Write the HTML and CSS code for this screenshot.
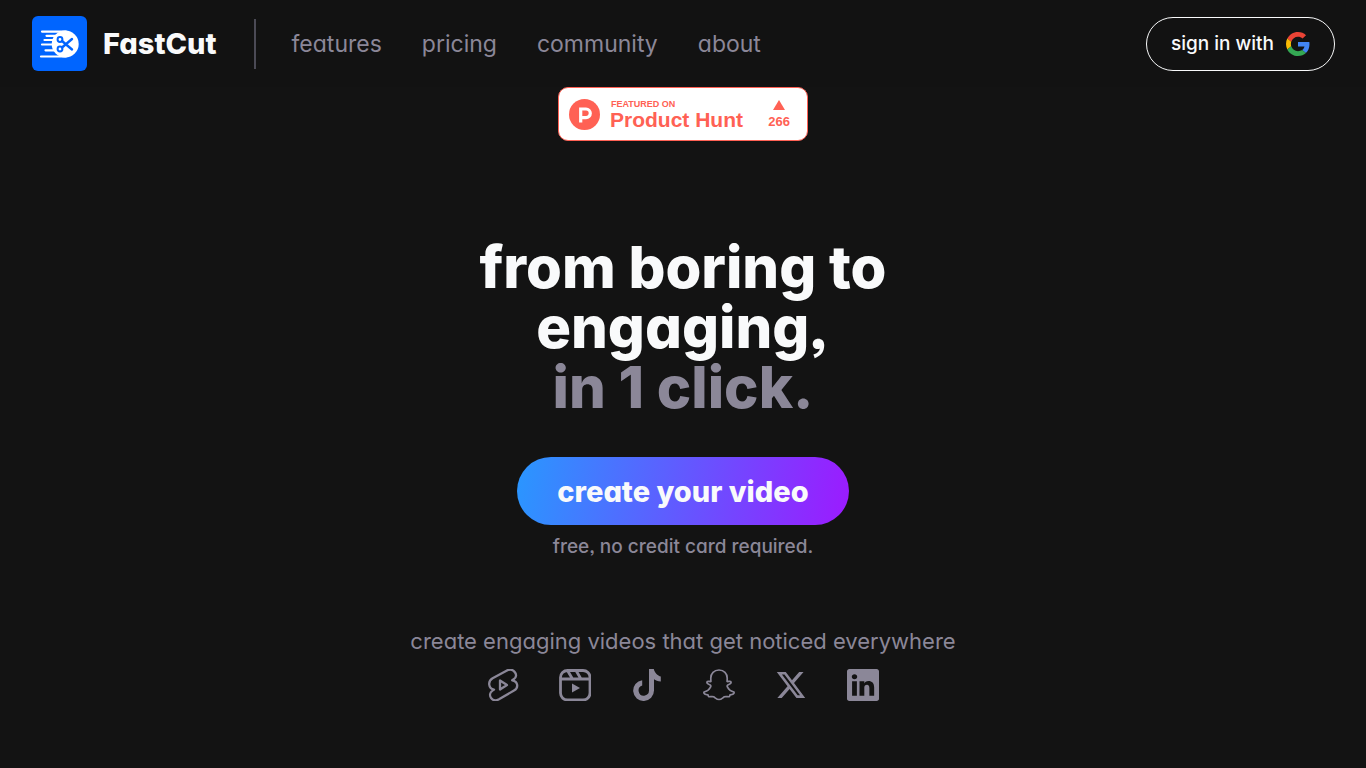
FILE: index.html
```html
<!DOCTYPE html>
<html lang="en">
<head>
<meta charset="utf-8">
<meta name="viewport" content="width=device-width, initial-scale=1">
<title>FastCut</title>
<link rel="stylesheet" href="styles.css">
</head>
<body>
<header class="header">
  <a class="brand" href="#">
    <svg class="brand-logo" viewBox="0 0 55 55" aria-hidden="true">
      <rect width="55" height="55" rx="6" fill="#0065ff"/>
      <g stroke="#fff" stroke-width="2.200" stroke-linecap="round" fill="none">
        <path d="M10 15.600H34M14.500 19.800H25M12.500 24H22M10 28.500H22M13.500 34.300H25M9 40.500H34"/>
      </g>
      <circle cx="33.200" cy="28" r="13.500" fill="#fff"/>
      <g stroke="#0065ff" fill="none" stroke-width="2">
        <circle cx="28" cy="23.500" r="2.400"/>
        <circle cx="28" cy="33" r="2.400"/>
        <path d="M30 25 40 33.500M30 31.500 40 23" stroke-width="2.400" stroke-linecap="round"/>
      </g>
    </svg>
    <span class="brand-name">FastCut</span>
  </a>
  <nav class="nav">
    <a href="#features">features</a>
    <a href="#pricing">pricing</a>
    <a href="#community">community</a>
    <a href="#about">about</a>
  </nav>
  <button class="sign-in" type="button">
    <span>sign in with</span>
    <svg class="google" viewBox="0 0 48 48" role="img" aria-label="Google">
      <path fill="#ea4335" d="M24 9.500c3.540 0 6.710 1.220 9.210 3.600l6.850-6.850C35.900 2.380 30.470 0 24 0 14.620 0 6.510 5.380 2.560 13.220l7.980 6.190C12.430 13.720 17.740 9.500 24 9.500z"/>
      <path fill="#4285f4" d="M46.980 24.550c0-1.570-.15-3.090-.38-4.550H24v9.020h12.940c-.58 2.960-2.260 5.480-4.780 7.180l7.730 6c4.510-4.180 7.090-10.360 7.090-17.650z"/>
      <path fill="#fbbc05" d="M10.530 28.590c-.48-1.450-.76-2.990-.76-4.590s.27-3.140.76-4.590l-7.980-6.190C.92 16.460 0 20.120 0 24c0 3.880.92 7.540 2.560 10.780l7.970-6.190z"/>
      <path fill="#34a853" d="M24 48c6.480 0 11.930-2.130 15.890-5.810l-7.730-6c-2.150 1.450-4.920 2.300-8.160 2.300-6.260 0-11.570-4.220-13.470-9.910l-7.980 6.190C6.510 42.620 14.620 48 24 48z"/>
    </svg>
  </button>
</header>
<main class="hero">
  <a class="product-hunt" href="#product-hunt">
    <svg class="ph-logo" viewBox="0 0 31 31" aria-hidden="true">
      <circle cx="15.500" cy="15.500" r="15.500" fill="#ff6154"/>
      <path d="M11.700 23.500V10H17a4.300 4.300 0 0 1 0 8.600h-5.300" fill="none" stroke="#fff" stroke-width="3.200"/>
    </svg>
    <span class="ph-text">
      <span class="ph-label">FEATURED ON</span>
      <span class="ph-name">Product Hunt</span>
    </span>
    <span class="ph-votes">
      <svg class="ph-arrow" viewBox="0 0 12 10" aria-hidden="true"><path d="M6 0 12 10H0z" fill="#ff6154"/></svg>
      <span>266</span>
    </span>
  </a>
  <h1 class="headline">from boring to<br>engaging,<br><span class="muted">in 1 click.</span></h1>
  <button class="cta" type="button">create your video</button>
  <p class="note">free, no credit card required.</p>
  <p class="tagline">create engaging videos that get noticed everywhere</p>
  <ul class="platforms">
    <li><svg viewBox="0 0 32 32" role="img" aria-label="YouTube Shorts" fill="none" stroke="currentColor" stroke-width="2.300" stroke-linejoin="round"><path d="M5.600 9.200 19.500 1.700c7-3.600 13 4.800 7.200 8.600l-1.500 1c6 1 6.600 7.600 1.800 10.300L12 30.200C5 34-.200 25.600 5.500 21.600l1.500-1C1.300 19.600.5 12.100 5.600 9.200Z"/><path d="M13 11.500v9l7-4.500z"/></svg></li>
    <li><svg viewBox="0 0 32 32" role="img" aria-label="Instagram Reels" fill="none" stroke="currentColor" stroke-width="2.800"><rect x="1.500" y="1.500" width="29.500" height="29.500" rx="7"/><path d="M1.500 10H31M8.500 1.500l5 8.500M17 1.500l5 8.500"/><path d="M13 14.500v9l8-4.500z" fill="currentColor" stroke="none"/></svg></li>
    <li><svg viewBox="0 0 16 16" role="img" aria-label="TikTok" fill="currentColor"><path transform="translate(.4 0)" d="M8.600 0h2.400c.144.715.54 1.617 1.235 2.350C12.895 3.100 13.797 3.600 14.500 3.700v2.500c-1.500 0-2.600-.5-3.400-1.100V10.800a5.200 5.200 0 1 1-5.900-5.150v2.600a2.600 2.600 0 1 0 3.400 2.550z"/></svg></li>
    <li><svg viewBox="0 0 32 32" role="img" aria-label="Snapchat" fill="none" stroke="currentColor" stroke-width="1.700" stroke-linejoin="round"><path d="M16 1c5 0 8.200 3.400 8.200 8 0 1.500-.1 2.600-.1 3.500 1 .3 2.300-.6 3.400 0 1.600 1.400-.4 2.500-2.700 3.500-.9.500-.7 1.300-.3 2.100 1.300 2.500 3.300 4.200 6.500 4.900.6 1.800-1.300 2.300-3.900 2.800-.5.500-.3 1.500-.8 1.900-1.600.2-3.400-.6-5 .1-1.800 1.100-3 2.700-5.300 2.700s-3.500-1.600-5.300-2.700c-1.600-.7-3.400.1-5-.1-.5-.4-.3-1.400-.8-1.900C2.300 25.300.4 24.800 1 23c3.200-.7 5.200-2.400 6.500-4.900.4-.8.6-1.600-.3-2.100-2.300-1-4.300-2.100-2.700-3.500 1.100-.6 2.400.3 3.400 0 0-.9-.1-2-.1-3.500 0-4.600 3.200-8 8.200-8Z"/></svg></li>
    <li><svg viewBox="0 0 18 18" role="img" aria-label="X" fill="currentColor"><path transform="translate(1 1)" d="M12.600.75h2.454l-5.360 6.142L16 15.250h-4.937l-3.867-5.070-4.425 5.070H.316l5.733-6.570L0 .75h5.063l3.495 4.633L12.601.75Zm-.86 13.028h1.360L4.323 2.145H2.865z"/></svg></li>
    <li><svg viewBox="0 0 16 16" role="img" aria-label="LinkedIn" fill="currentColor"><path d="M0 1.146C0 .513.526 0 1.175 0h13.650C15.474 0 16 .513 16 1.146v13.708c0 .633-.526 1.146-1.175 1.146H1.175C.526 16 0 15.487 0 14.854zm4.943 12.248V6.169H2.542v7.225zm-1.200-8.212c.837 0 1.358-.554 1.358-1.248-.015-.709-.52-1.248-1.342-1.248S2.400 3.226 2.400 3.934c0 .694.521 1.248 1.327 1.248zm4.908 8.212V9.359c0-.216.016-.432.08-.586.173-.431.568-.878 1.232-.878.869 0 1.216.662 1.216 1.634v3.865h2.401V9.250c0-2.220-1.184-3.252-2.764-3.252-1.274 0-1.845.7-2.165 1.193v.025h-.016l.016-.025V6.169h-2.400c.03.678 0 7.225 0 7.225z"/></svg></li>
  </ul>
</main>
</body>
</html>
```
FILE: styles.css
```css
* {
  box-sizing: border-box;
}

body {
  margin: 0;
  min-height: 100vh;
  background: #131313;
  color: #f9fafb;
  font-family: Inter, "Open Sans", sans-serif;
  font-feature-settings: "cv11", "ss03";
}

a {
  color: inherit;
  text-decoration: none;
}

button {
  font: inherit;
  font-feature-settings: inherit;
  color: inherit;
  cursor: pointer;
}

.header {
  display: flex;
  align-items: center;
  padding: 16px 31px 16px 32px;
  background: #121212;
}

.brand {
  display: flex;
  align-items: center;
  gap: 16px;
  padding-right: 37px;
}

.brand-logo {
  width: 55px;
  height: 55px;
}

.brand-name {
  font-size: 29px;
  font-weight: 800;
}

.nav {
  display: flex;
  align-items: center;
  gap: 40px;
  height: 50px;
  padding-left: 36px;
  border-left: 2px solid #4b4a55;
  color: #8b8798;
  font-size: 23px;
}

.sign-in {
  display: flex;
  align-items: center;
  gap: 12px;
  height: 54px;
  margin-left: auto;
  padding: 0 24px;
  border: 1px solid #f9fafb;
  border-radius: 27px;
  background: transparent;
  font-size: 19px;
  font-weight: 500;
}

.google {
  width: 24px;
  height: 24px;
}

.hero {
  display: flex;
  flex-direction: column;
  align-items: center;
  text-align: center;
}

.product-hunt {
  display: flex;
  align-items: center;
  width: 250px;
  height: 54px;
  padding: 0 17px 0 10px;
  border: 1px solid #ff6154;
  border-radius: 10px;
  background: #fff;
  color: #ff6154;
  font-family: "Liberation Sans", Arial, sans-serif;
  font-weight: 700;
}

.ph-logo {
  width: 31px;
  height: 31px;
}

.ph-text {
  display: flex;
  flex-direction: column;
  margin-left: 10px;
  padding-top: 2px;
  text-align: left;
}

.ph-label {
  padding-left: 1px;
  font-size: 9px;
  line-height: 10px;
}

.ph-name {
  font-size: 21px;
  line-height: 22px;
}

.ph-votes {
  display: flex;
  flex-direction: column;
  align-items: center;
  gap: 4px;
  margin-left: auto;
  padding-top: 2px;
  font-size: 13px;
  line-height: 16px;
}

.ph-arrow {
  width: 12px;
  height: 10px;
}

.headline {
  margin: 96px 0 40px;
  font-size: 58px;
  font-weight: 800;
  line-height: 60px;
}

.muted {
  color: #8b8798;
}

.cta {
  height: 68px;
  padding: 0 40px;
  border: 0;
  border-radius: 34px;
  background: linear-gradient(100deg, #2997ff, #9c1aff);
  font-size: 29px;
  font-weight: 800;
}

.note {
  margin: 8px 0 0;
  color: #8b8798;
  font-size: 19px;
  font-weight: 500;
  line-height: 28px;
}

.tagline {
  margin: 64px 0 12px;
  color: #8b8798;
  font-size: 22px;
  line-height: 32px;
}

.platforms {
  display: flex;
  gap: 40px;
  margin: 0;
  padding: 0;
  color: #8b8798;
  list-style: none;
}

.platforms svg {
  display: block;
  width: 32px;
  height: 32px;
}
```
